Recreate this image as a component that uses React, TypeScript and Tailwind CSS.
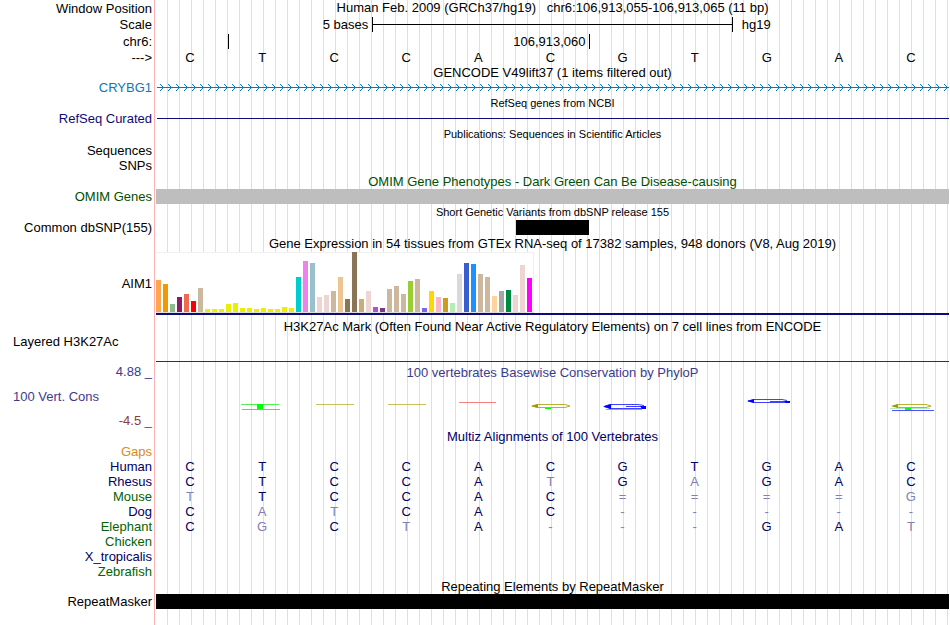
import type { ReactNode } from "react";

const TITLE_POSITION = "Human Feb. 2009 (GRCh37/hg19)\u00a0\u00a0 chr6:106,913,055-106,913,065 (11 bp)";

const BASES = "CTCCACGTGAC";

// lower case marks a base that differs from human and is drawn lighter
const ALIGNMENTS = [
  { species: "Gaps", color: "text-[#e08a10]", seq: "" },
  { species: "Human", color: "text-[#000064]", seq: "CTCCACGTGAC" },
  { species: "Rhesus", color: "text-[#000064]", seq: "CTCCAtGaGAC" },
  { species: "Mouse", color: "text-[#006400]", seq: "tTCCAC====g" },
  { species: "Dog", color: "text-[#000064]", seq: "CatCAC-----" },
  { species: "Elephant", color: "text-[#006400]", seq: "CgCtA---GAt" },
  { species: "Chicken", color: "text-[#006400]", seq: "" },
  { species: "X_tropicalis", color: "text-[#000064]", seq: "" },
  { species: "Zebrafish", color: "text-[#006400]", seq: "" },
];

// [height, color] for each GTEx tissue
const TISSUES: [number, string][] = [
  [32, "#ffa54f"], [28, "#ee9a00"], [8, "#8fbc8f"], [15, "#8b1c62"], [18, "#ee6a50"], [11, "#ff0000"],
  [24, "#cdb79e"], [3, "#eeee00"], [3, "#eeee00"], [3, "#eeee00"], [8, "#eeee00"], [9, "#eeee00"],
  [4, "#eeee00"], [4, "#eeee00"], [3, "#eeee00"], [4, "#eeee00"], [3, "#eeee00"], [3, "#eeee00"],
  [5, "#eeee00"], [4, "#eeee00"], [35, "#00cdcd"], [51, "#ee82ee"], [49, "#9ac0cd"], [15, "#eed5d2"],
  [17, "#eed5d2"], [21, "#cdb79e"], [35, "#eec591"], [13, "#8b7355"], [60, "#8b7355"], [13, "#cdaa7d"],
  [21, "#eed5d2"], [5, "#b452cd"], [4, "#7a378b"], [23, "#cdb79e"], [26, "#cdb79e"], [18, "#cdb79e"],
  [31, "#9acd32"], [33, "#cdb79e"], [4, "#7a67ee"], [21, "#ffd700"], [15, "#ffb6c1"], [14, "#cd9b1d"],
  [9, "#b4eeb4"], [38, "#d9d9d9"], [49, "#3a5fcd"], [48, "#1e90ff"], [38, "#cdb79e"], [35, "#cdb79e"],
  [16, "#ffd39b"], [21, "#a6a6a6"], [22, "#008b45"], [17, "#eed5d2"], [47, "#eed5d2"], [34, "#ff00ff"],
];

export default function App() {
  return (
    <main className="relative min-h-screen overflow-hidden bg-white font-['Liberation_Sans',Arial,sans-serif] text-[13px] leading-[15px] text-black">
      <div className="absolute inset-0 flex" aria-hidden>
        <div className="w-[155px] shrink-0 border-r border-[#ffb0b0]" />
        <div className="ml-px flex-1 bg-[linear-gradient(to_right,transparent_11px,#dcdcf8_11px)] bg-[length:12px_100%]" />
      </div>

      <div className="relative pr-px">
        <Row label="Window Position" height="h-4">
          <h1 className="text-center">{TITLE_POSITION}</h1>
        </Row>
        <Row label="Scale" height="h-[17px]">
          <div className="grid h-full grid-cols-11 items-center">
            <span className="col-span-3 pr-1 text-right">5 bases</span>
            <div className="col-span-5 flex h-[15px] items-center border-x border-black">
              <div className="h-px w-full bg-black" />
            </div>
            <span className="col-span-3 pl-[9px]">hg19</span>
          </div>
        </Row>
        <Row label="chr6:" height="h-[17px]">
          <div className="grid h-full grid-cols-11 items-center">
            <span className="col-span-1" />
            <span className="col-span-5 h-[15px] border-l border-black pr-[3px] text-right leading-4">106,913,060</span>
            <span className="col-span-5 h-[15px] border-l border-black" />
          </div>
        </Row>
        <Row label="--->">
          <div className="grid grid-cols-11">
            {BASES.split("").map((base, i) => (
              <span key={i} className="pr-1 text-center">{base}</span>
            ))}
          </div>
        </Row>

        <Title height="h-[15px]">GENCODE V49lift37 (1 items filtered out)</Title>
        <Row label="CRYBG1" color="text-[#0c78b8]">
          <Arrows />
        </Row>

        <Title small>RefSeq genes from NCBI</Title>
        <Row label="RefSeq Curated" color="text-[#0c0c78]">
          <div className="flex h-full items-center pl-px">
            <div className="h-px w-full bg-[#0c0c78]" />
          </div>
        </Row>

        <Title small>Publications: Sequences in Scientific Articles</Title>
        <Row label="Sequences" height="h-4" />
        <Row label="SNPs" />

        <Title color="text-[#005000]">OMIM Gene Phenotypes - Dark Green Can Be Disease-causing</Title>
        <Row label="OMIM Genes" color="text-[#005000]">
          <div className="h-full bg-[#bebebe]" />
        </Row>

        <Title small>Short Genetic Variants from dbSNP release 155</Title>
        <Row label="Common dbSNP(155)">
          <div className="grid h-full grid-cols-11">
            <div className="col-start-6 bg-black" />
          </div>
        </Row>

        <Title>Gene Expression in 54 tissues from GTEx RNA-seq of 17382 samples, 948 donors (V8, Aug 2019)</Title>
        <Row label="AIM1" height="h-16">
          <div className="mt-px border-b-2 border-[#0c0c78]">
            <div className="flex h-[61px] w-[378px] items-end gap-0.5 border-b border-[#dddddd] bg-white shadow-[inset_-1px_1px_0_#f0f0f0]">
              {TISSUES.map(([height, color], i) => (
                <div key={i} className="w-[5px] shrink-0" style={{ height, backgroundColor: color }} />
              ))}
            </div>
          </div>
        </Row>

        <div className="pt-[3px]">
          <Title>H3K27Ac Mark (Often Found Near Active Regulatory Elements) on 7 cell lines from ENCODE</Title>
        </div>
        <div className="flex h-7 items-start">
          <span className="w-[156px] shrink-0 pl-[13px]">Layered H3K27Ac</span>
          <div className="h-full flex-1 border-b border-[#402840]" />
        </div>

        <div className="flex h-[66px]">
          <div className="flex w-[156px] shrink-0 flex-col justify-between pt-0.5 pr-1 text-[#3c3c8c]">
            <span className="text-right">4.88 _</span>
            <span className="pl-[13px]">100 Vert. Cons</span>
            <span className="text-right text-[#8c3c3c]">-4.5 _</span>
          </div>
          <div className="flex-1">
            <h2 className="pt-[3px] text-center text-[#3c3c8c]">100 vertebrates Basewise Conservation by PhyloP</h2>
            <Logo />
          </div>
        </div>

        <Title color="text-[#000064]">Multiz Alignments of 100 Vertebrates</Title>
        <table className="w-full table-fixed border-collapse">
          <colgroup>
            <col className="w-[156px]" />
          </colgroup>
          <tbody>
            {ALIGNMENTS.map(({ species, color, seq }) => (
              <tr key={species} className="h-[15px]">
                <th scope="row" className={`p-0 pr-1 text-right font-normal ${color}`}>{species}</th>
                {seq.padEnd(11).split("").map((base, i) => (
                  <td
                    key={i}
                    className={`p-0 pr-1 text-center ${/[A-Z]/.test(base) ? "text-[#000064]" : "text-[#8080b4]"}`}
                  >
                    {base.toUpperCase()}
                  </td>
                ))}
              </tr>
            ))}
          </tbody>
        </table>

        <Title height="h-[15px]">Repeating Elements by RepeatMasker</Title>
        <Row label="RepeatMasker">
          <div className="h-full bg-black" />
        </Row>
      </div>
    </main>
  );
}

function Row({
  label,
  color = "text-black",
  height = "h-[15px]",
  children,
}: {
  label: string;
  color?: string;
  height?: string;
  children?: ReactNode;
}) {
  return (
    <div className={`flex ${height}`}>
      <div className={`flex w-[156px] shrink-0 items-center justify-end pr-1 ${color}`}>{label}</div>
      <div className="min-w-0 flex-1">{children}</div>
    </div>
  );
}

function Title({
  children,
  color = "text-black",
  height = "h-4",
  small = false,
}: {
  children: ReactNode;
  color?: string;
  height?: string;
  small?: boolean;
}) {
  return (
    <h2
      className={`flex items-center justify-center pl-[156px] whitespace-nowrap ${height} ${small ? "text-[11px]" : "text-[13px]"} ${color}`}
    >
      {children}
    </h2>
  );
}

// strand direction marks along the gene's intron
function Arrows() {
  return (
    <svg className="block h-[15px] w-full" aria-hidden>
      <defs>
        <pattern id="strand" width="8" height="15" patternUnits="userSpaceOnUse">
          <path d="M4 4h1v1h-1zM5 5h1v1h-1zM6 6h1v1h-1zM6 8h1v1h-1zM5 9h1v1h-1zM4 10h1v1h-1z" fill="#0c78b8" />
        </pattern>
      </defs>
      <rect width="100%" height="15" fill="url(#strand)" />
      <rect x="1" y="7" width="100%" height="1" fill="#0c78b8" />
    </svg>
  );
}

// squashed per-base letters of the conservation score
function Logo() {
  return (
    <svg viewBox="156 380 793 34" className="block w-full" fill="none" aria-hidden>
      <path d="M241 404.500h38" stroke="#50f050" />
      <path d="M242 409.500h38" stroke="#f88080" />
      <path d="M257 404h6v5h-6z" fill="#00ff00" />
      <path d="M316 404.500h38M388 404.500h38" stroke="#c8c060" />
      <path d="M459 402.500h37" stroke="#f88080" />

      <path d="M565 404.500h-27l-6 1.500l6 1.500h27l5-1.500z" stroke="#b8b030" />
      <path d="M531 406l7-2v4z" fill="#a09800" />
      <path d="M545 408h6v1h-6z" fill="#00ff00" />

      <path d="M606 409.500h36" stroke="#f88080" />
      <path d="M644 405.500l-6-1h-28l-6 2l6 2h34v-2h-18" stroke="#4040ff" />
      <path d="M603 406.500l8-2.500v5zM640 406h6v3h-4z" fill="#0000ff" />

      <path d="M787 400.500l-5-1h-28l-6 1.500l6 1.500h34v-1h-18" stroke="#4040ff" />
      <path d="M747 401l7-2v4zM784 401h6v2h-4z" fill="#0000ff" />

      <path d="M890 408.500h40" stroke="#b0f0b0" />
      <path d="M926 404.500h-27l-6 1.500l6 1.500h27l5-1.500z" stroke="#b8b030" />
      <path d="M891 406l7-2v4z" fill="#a09800" />
      <path d="M905 408h6v2h-6z" fill="#00ff00" />
      <path d="M892 410.500h42" stroke="#5050ff" />
    </svg>
  );
}
